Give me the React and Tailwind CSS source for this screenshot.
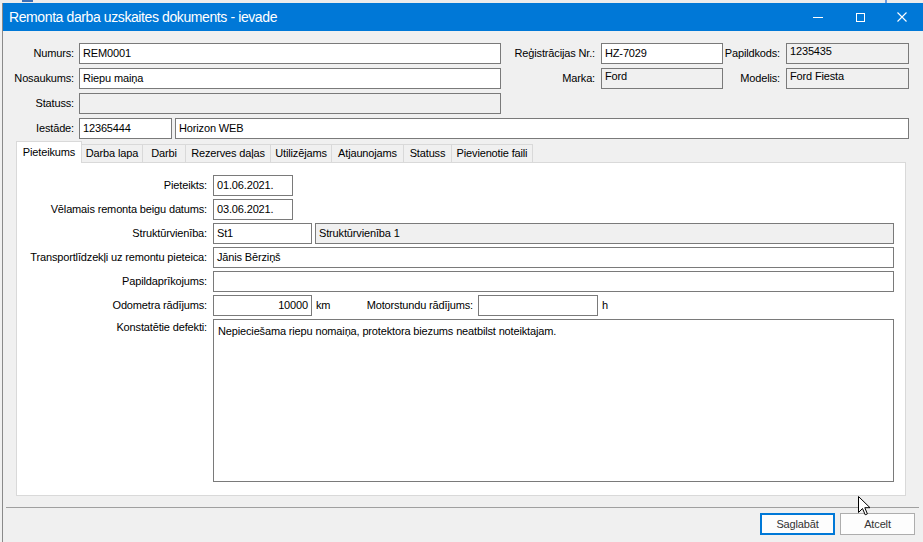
import React from "react";

const F = "font-['Liberation_Sans',Arial,sans-serif]";

function Box({ w, value = "", disabled = false, right = false, top = false, extra = "" }) {
  return (
    <div
      className={
        "h-[21px] shrink-0 border border-[#7a7a7a] px-[3px] flex whitespace-nowrap overflow-hidden text-black " +
        (disabled ? "bg-[#f0f0f0] " : "bg-white ") +
        (top ? "items-start pt-[1px] " : "items-center ") +
        (right ? "justify-end " : "") +
        w +
        " " +
        extra
      }
    >
      {value}
    </div>
  );
}

function Label({ w, children }) {
  return <div className={"shrink-0 text-right whitespace-nowrap text-black " + w}>{children}</div>;
}

function Tab({ label, w, active }) {
  if (active) {
    return (
      <div
        className={
          "relative z-10 -mb-px h-[22px] border border-b-0 border-[#d9d9d9] bg-white flex items-start justify-center pt-[4px] " +
          w
        }
      >
        {label}
      </div>
    );
  }
  return (
    <div
      className={
        "h-[18px] -ml-px first:ml-0 border border-b-0 border-[#d9d9d9] bg-[#f0f0f0] flex items-center justify-center " + w
      }
    >
      {label}
    </div>
  );
}

export default function App() {
  return (
    <div
      className={
        "relative w-[923px] h-[542px] overflow-hidden bg-[#ececec] text-[11px] leading-[13px] tracking-[-0.15px] " + F
      }
    >
      <div className="h-[3px] flex">
        <div className="ml-[22px] w-[11px] h-[2px] bg-[#3b6fb6]" />
        <div className="ml-[852px] w-[2px] h-[3px] bg-[#6a9be0]" />
      </div>
      <div className="flex h-[539px]">
        <div className="w-[2px] bg-[#f0f0f0]" />
        <div className="w-px bg-[#8a8a8a]" />
        <div className="flex-1 flex flex-col bg-[#f0f0f0]">
          {/* title bar */}
          <div className="h-[28px] bg-[#0078d7] flex items-center text-white">
            <div className="pl-[6px] text-[14px] tracking-[-0.4px] whitespace-nowrap flex-1">
              Remonta darba uzskaites dokuments - ievade
            </div>
            <div className="flex h-full">
              <div className="w-[42px] h-full flex items-center justify-center">
                <div className="w-[10px] h-px bg-white" />
              </div>
              <div className="w-[42px] h-full flex items-center justify-center">
                <div className="w-[9px] h-[9px] border border-white" />
              </div>
              <div className="w-[42px] h-full flex items-center justify-center">
                <svg width="10" height="10" viewBox="0 0 10 10">
                  <path d="M0.5 0.5 L9.5 9.5 M9.5 0.5 L0.5 9.5" stroke="white" strokeWidth="1.1" fill="none" />
                </svg>
              </div>
            </div>
          </div>

          {/* header fields */}
          <div className="flex flex-col gap-[4px] pt-[12px]">
            <div className="flex items-center">
              <Label w="w-[71px]">Numurs:</Label>
              <Box w="w-[422px] ml-[5px]" value="REM0001" />
              <Label w="w-[94px]">Reģistrācijas Nr.:</Label>
              <Box w="w-[122px] ml-[6px]" value="HZ-7029" />
              <Label w="w-[57px]">Papildkods:</Label>
              <Box w="w-[123px] ml-[6px]" value="1235435" disabled top />
            </div>
            <div className="flex items-center">
              <Label w="w-[71px]">Nosaukums:</Label>
              <Box w="w-[422px] ml-[5px]" value="Riepu maiņa" />
              <Label w="w-[94px]">Marka:</Label>
              <Box w="w-[122px] ml-[6px]" value="Ford" disabled top />
              <Label w="w-[57px]">Modelis:</Label>
              <Box w="w-[123px] ml-[6px]" value="Ford Fiesta" disabled top />
            </div>
            <div className="flex items-center">
              <Label w="w-[71px]">Statuss:</Label>
              <Box w="w-[422px] ml-[5px]" disabled />
            </div>
            <div className="flex items-center">
              <Label w="w-[71px]">Iestāde:</Label>
              <Box w="w-[93px] ml-[5px]" value="12365444" />
              <Box w="w-[734px] ml-[3px]" value="Horizon WEB" />
            </div>
          </div>

          {/* tabs */}
          <div className="ml-[13px] mt-[2px] flex items-end h-[21px]">
            <Tab label="Pieteikums" w="w-[66px]" active />
            <Tab label="Darba lapa" w="w-[62px]" />
            <Tab label="Darbi" w="w-[44px]" />
            <Tab label="Rezerves daļas" w="w-[86px]" />
            <Tab label="Utilizējams" w="w-[62px]" />
            <Tab label="Atjaunojams" w="w-[73px]" />
            <Tab label="Statuss" w="w-[49px]" />
            <Tab label="Pievienotie faili" w="w-[82px]" />
          </div>
          <div className="ml-[13px] w-[890px] h-[334px] border border-[#d9d9d9] bg-white pt-[12px] flex flex-col gap-[3px]">
            <div className="flex items-center">
              <Label w="w-[190px]">Pieteikts:</Label>
              <Box w="w-[80px] ml-[6px]" value="01.06.2021." />
            </div>
            <div className="flex items-center">
              <Label w="w-[190px]">Vēlamais remonta beigu datums:</Label>
              <Box w="w-[80px] ml-[6px]" value="03.06.2021." />
            </div>
            <div className="flex items-center">
              <Label w="w-[190px]">Struktūrvienība:</Label>
              <Box w="w-[99px] ml-[6px]" value="St1" />
              <Box w="w-[579px] ml-[3px]" value="Struktūrvienība 1" disabled />
            </div>
            <div className="flex items-center">
              <Label w="w-[190px]">Transportlīdzekļi uz remontu pieteica:</Label>
              <Box w="w-[681px] ml-[6px]" value="Jānis Bērziņš" />
            </div>
            <div className="flex items-center">
              <Label w="w-[190px]">Papildaprīkojums:</Label>
              <Box w="w-[681px] ml-[6px]" />
            </div>
            <div className="flex items-center">
              <Label w="w-[190px]">Odometra rādījums:</Label>
              <Box w="w-[99px] ml-[6px]" value="10000" right />
              <div className="w-[40px] pl-[4px]">km</div>
              <Label w="w-[121px]">Motorstundu rādījums:</Label>
              <Box w="w-[120px] ml-[5px]" />
              <div className="pl-[4px]">h</div>
            </div>
            <div className="flex items-start">
              <Label w="w-[190px] pt-[2px]">Konstatētie defekti:</Label>
              <div className="ml-[6px] w-[681px] h-[163px] border border-[#7a7a7a] bg-white pl-[4px] pt-[5px] text-black">
                Nepieciešama riepu nomaiņa, protektora biezums neatbilst noteiktajam.
              </div>
            </div>
          </div>

          {/* footer */}
          <div className="mt-[11px] ml-[3px] w-[913px] h-px bg-[#a0a0a0]" />
          <div className="mt-[5px] pl-[757px] flex gap-[5px]">
            <div className="w-[75px] h-[22px] border-2 border-[#0078d7] bg-[#fdfdfd] flex items-center justify-center text-[#333]">
              Saglabāt
            </div>
            <div className="w-[75px] h-[22px] border border-[#adadad] bg-[#fdfdfd] flex items-center justify-center text-[#333]">
              Atcelt
            </div>
          </div>
        </div>
      </div>

      {/* mouse cursor */}
      <svg className="absolute left-[858px] top-[496px]" width="13" height="21" viewBox="0 0 13 21">
        <path
          d="M0.5 0.5 L0.5 16.5 L4.5 12.5 L7.2 18.8 L9.4 17.9 L6.8 11.7 L12 11.7 Z"
          fill="white"
          stroke="black"
          strokeWidth="1"
          strokeLinejoin="miter"
        />
      </svg>
    </div>
  );
}
